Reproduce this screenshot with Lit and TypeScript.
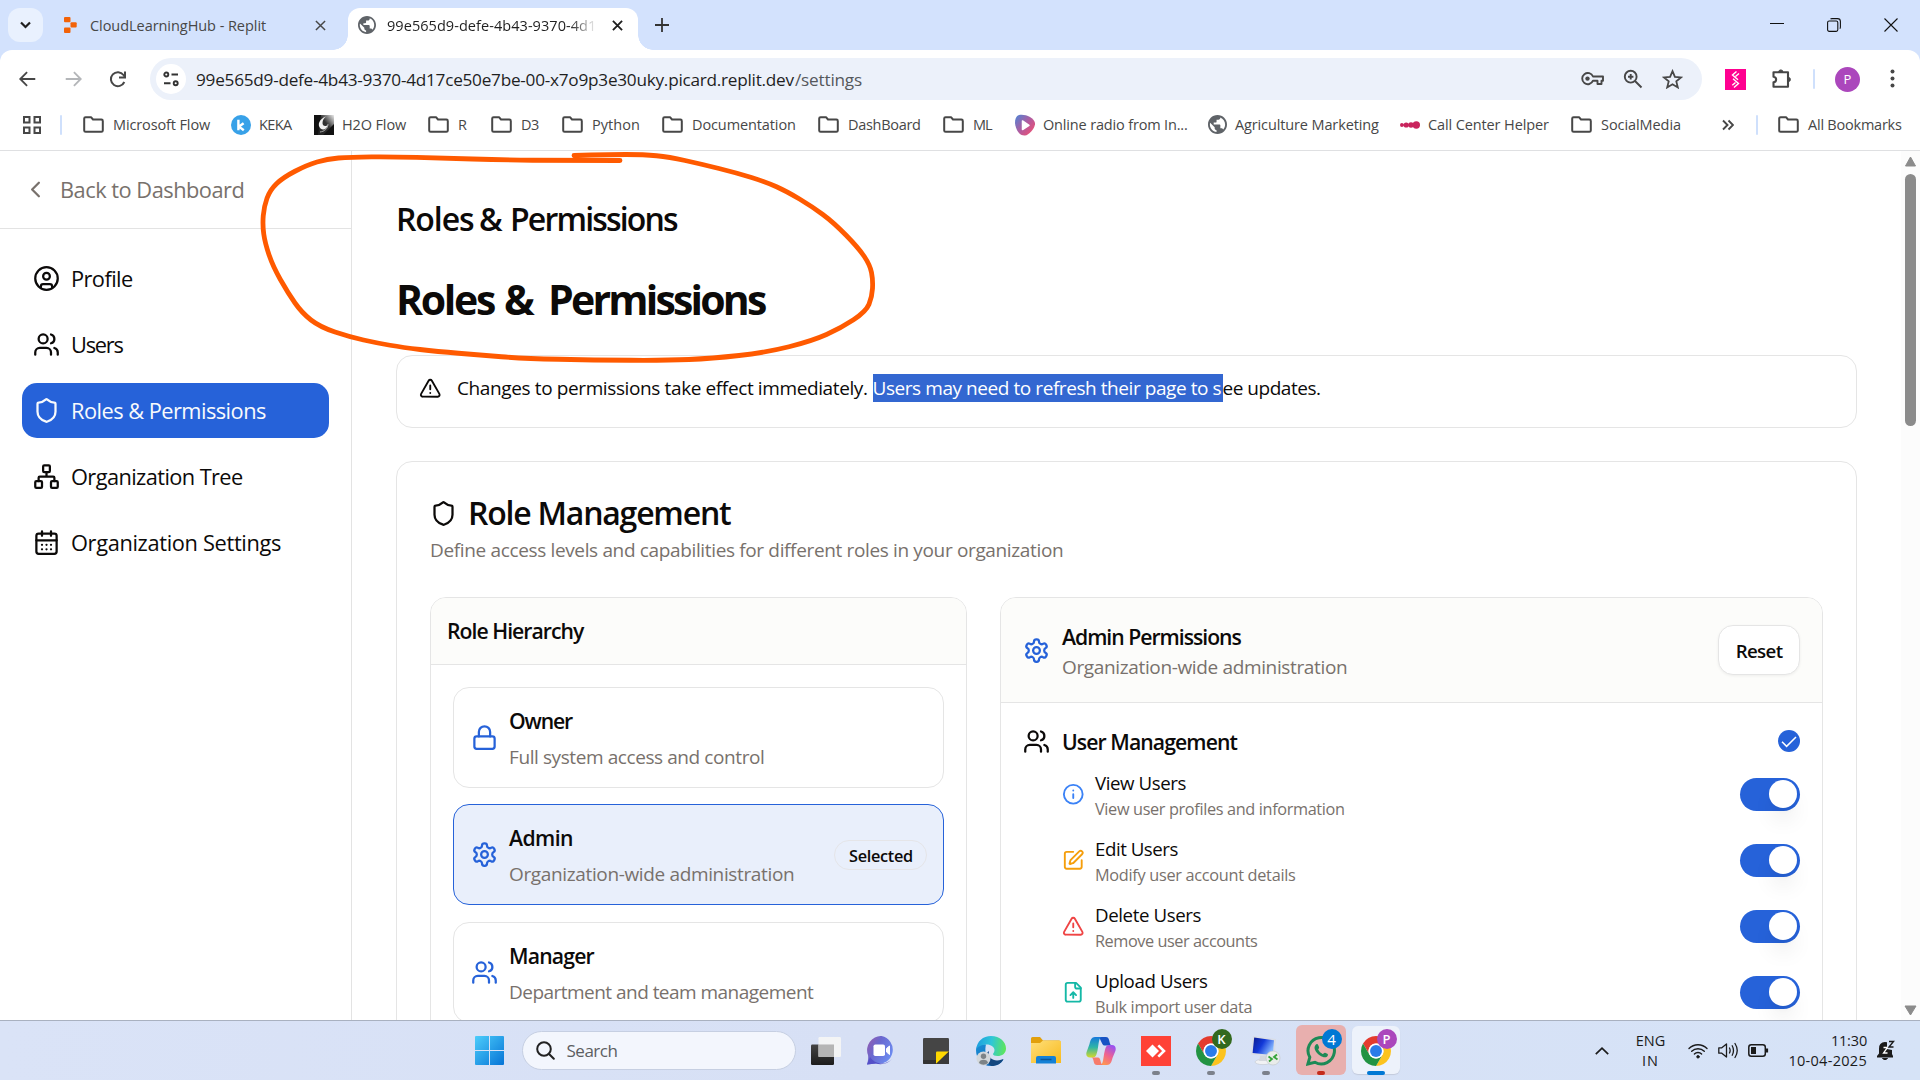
import { LitElement, html, css, svg, nothing } from "lit";
import { customElement, property } from "lit/decorators.js";

/* A single line of text whose tracking is tuned so that its ink spans `w` pixels. */
@customElement("fit-text")
class FitText extends LitElement {
  @property() text = "";
  @property({ type: Number }) w = 0;
  static styles = css`
    :host { display: inline-block; white-space: pre; }
  `;
  render() {
    return html`${this.text}`;
  }
  updated() {
    if (!this.w || this.text.length < 2) return;
    const cs = getComputedStyle(this);
    const ctx = document.createElement("canvas").getContext("2d")!;
    ctx.font = `${cs.fontWeight} ${cs.fontSize} ${cs.fontFamily}`;
    const m = ctx.measureText(this.text);
    const ink = m.actualBoundingBoxLeft + m.actualBoundingBoxRight;
    this.style.letterSpacing = `${(this.w - ink) / (this.text.length - 1)}px`;
  }
}

const t = (text: string, w: number) => html`<fit-text .text=${text} .w=${w}></fit-text>`;

/* 24-unit stroke icons */
const glyphs: Record<string, unknown> = {
  chevron: svg`<path d="m15 18-6-6 6-6"/>`,
  profile: svg`<circle cx="12" cy="12" r="10"/><circle cx="12" cy="10" r="3"/><path d="M7 20.662V19a2 2 0 0 1 2-2h6a2 2 0 0 1 2 2v1.662"/>`,
  users: svg`<path d="M16 21v-2a4 4 0 0 0-4-4H6a4 4 0 0 0-4 4v2"/><circle cx="9" cy="7" r="4"/><path d="M22 21v-2a4 4 0 0 0-3-3.87"/><path d="M16 3.13a4 4 0 0 1 0 7.75"/>`,
  shield: svg`<path d="M20 13c0 5-3.5 7.5-7.66 8.95a1 1 0 0 1-.67-.01C7.5 20.5 4 18 4 13V6a1 1 0 0 1 1-1c2 0 4.5-1.2 6.24-2.72a1.17 1.17 0 0 1 1.52 0C14.51 3.81 17 5 19 5a1 1 0 0 1 1 1z"/>`,
  network: svg`<rect x="16" y="16" width="6" height="6" rx="1"/><rect x="2" y="16" width="6" height="6" rx="1"/><rect x="9" y="2" width="6" height="6" rx="1"/><path d="M5 16v-3a1 1 0 0 1 1-1h12a1 1 0 0 1 1 1v3M12 12V8"/>`,
  calendar: svg`<path d="M8 2v4M16 2v4"/><rect x="3" y="4" width="18" height="18" rx="2"/><path d="M3 10h18M8 14h.01M12 14h.01M16 14h.01M8 18h.01M12 18h.01M16 18h.01"/>`,
  alert: svg`<path d="m21.73 18-8-14a2 2 0 0 0-3.48 0l-8 14A2 2 0 0 0 4 21h16a2 2 0 0 0 1.73-3M12 9v4M12 17h.01"/>`,
  lock: svg`<rect x="3" y="11" width="18" height="11" rx="2"/><path d="M7 11V7a5 5 0 0 1 10 0v4"/>`,
  gear: svg`<path d="M12.22 2h-.44a2 2 0 0 0-2 2v.18a2 2 0 0 1-1 1.73l-.43.25a2 2 0 0 1-2 0l-.15-.08a2 2 0 0 0-2.73.73l-.22.38a2 2 0 0 0 .73 2.73l.15.1a2 2 0 0 1 1 1.72v.51a2 2 0 0 1-1 1.74l-.15.09a2 2 0 0 0-.73 2.73l.22.38a2 2 0 0 0 2.73.73l.15-.08a2 2 0 0 1 2 0l.43.25a2 2 0 0 1 1 1.73V20a2 2 0 0 0 2 2h.44a2 2 0 0 0 2-2v-.18a2 2 0 0 1 1-1.73l.43-.25a2 2 0 0 1 2 0l.15.08a2 2 0 0 0 2.73-.73l.22-.39a2 2 0 0 0-.73-2.73l-.15-.08a2 2 0 0 1-1-1.74v-.5a2 2 0 0 1 1-1.74l.15-.09a2 2 0 0 0 .73-2.73l-.22-.38a2 2 0 0 0-2.73-.73l-.15.08a2 2 0 0 1-2 0l-.43-.25a2 2 0 0 1-1-1.73V4a2 2 0 0 0-2-2z"/><circle cx="12" cy="12" r="3"/>`,
  info: svg`<circle cx="12" cy="12" r="10"/><path d="M12 16v-4M12 8h.01"/>`,
  edit: svg`<path d="M12 3H5a2 2 0 0 0-2 2v14a2 2 0 0 0 2 2h14a2 2 0 0 0 2-2v-7"/><path d="M18.375 2.625a1 1 0 0 1 3 3l-9.013 9.014a2 2 0 0 1-.853.505l-2.873.84a.5.5 0 0 1-.62-.62l.84-2.873a2 2 0 0 1 .506-.852z"/>`,
  upload: svg`<path d="M15 2H6a2 2 0 0 0-2 2v16a2 2 0 0 0 2 2h12a2 2 0 0 0 2-2V7Z"/><path d="M14 2v4a2 2 0 0 0 2 2h4M12 12v6M15 15l-3-3-3 3"/>`,
};
const line = (name: string, size = 27, cls = "") =>
  html`<svg class="ic ${cls}" width=${size} height=${size} viewBox="0 0 24 24" fill="none" stroke="currentColor" stroke-width="2" stroke-linecap="round" stroke-linejoin="round">${glyphs[name]}</svg>`;

const globe = (s: number) =>
  html`<svg class="ic" width=${s} height=${s} viewBox="2 2 20 20" fill="#5f6368"><path d="M12 2C6.48 2 2 6.48 2 12s4.48 10 10 10 10-4.48 10-10S17.52 2 12 2zm-1 17.93c-3.95-.49-7-3.85-7-7.93 0-.62.08-1.21.21-1.79L9 15v1c0 1.1.9 2 2 2v1.93zm6.9-2.54c-.26-.81-1-1.39-1.9-1.39h-1v-3c0-.55-.45-1-1-1H8v-2h2c.55 0 1-.45 1-1V7h2c1.1 0 2-.9 2-2v-.41c2.93 1.19 5 4.06 5 7.41 0 2.08-.8 3.97-2.1 5.39z"/></svg>`;

const cross = (s: number, w: number) =>
  html`<svg class="ic" width=${s} height=${s} viewBox="0 0 12 12" stroke="currentColor" stroke-width=${w} fill="none"><path d="M1 1l10 10M11 1L1 11"/></svg>`;

const folder = html`<svg class="ic" width="21" height="17" viewBox="0 0 21 17" fill="none" stroke="#474747" stroke-width="2" stroke-linejoin="round"><path d="M1.2 2.6c0-.8.6-1.4 1.4-1.4H8l2 2.3h8.4c.8 0 1.4.6 1.4 1.4v9.5c0 .8-.6 1.4-1.4 1.4H2.6c-.8 0-1.4-.6-1.4-1.4z"/></svg>`;

const keka = html`<svg class="ic" width="20" height="20" viewBox="0 0 20 20"><circle cx="10" cy="10" r="10" fill="#38a1e8"/><path d="M7.4 4.8v10.4M12.6 8.2L8 11.6l4.8 3.6" stroke="#fff" stroke-width="2.4" fill="none"/></svg>`;

const h2o = html`<svg class="ic" width="20" height="20" viewBox="0 0 20 20"><defs><linearGradient id="h" x1="0" x2="1" y1="1" y2="0"><stop offset="0" stop-color="#222"/><stop offset=".55" stop-color="#333"/><stop offset="1" stop-color="#eee"/></linearGradient></defs><path fill="#111" d="M0 0h20v20H0z"/><path fill="url(#h)" d="M7 0h13v9L9 20H4z"/><path d="M12 1.500C5 4 3 10 6.500 13.500c3 2.500 7 0 7.500-4-2 2.500-5.500 2-5.500-1.500C8.500 5 10 3 12 1.500z" fill="#f2f2f2"/><path d="M14 9c0 5-4 7.500-8 8" stroke="#aaa" fill="none"/></svg>`;

const radio = html`<svg class="ic" width="20" height="22" viewBox="0 0 20 22"><defs><linearGradient id="r" x1="0" y1="0" x2="1" y2=".9"><stop offset="0" stop-color="#4a86d8"/><stop offset=".55" stop-color="#b65a9c"/><stop offset="1" stop-color="#f4506e"/></linearGradient></defs><path fill="url(#r)" d="M4 1C9-.5 19 3 20 9c.5 5-6 12-10 12.500C4 22 .5 15 0 9 0 5 1 2 4 1z"/><path d="M7.500 7v8.500l6.500-4.200z" fill="#fff" stroke="#fff" stroke-width="1.500" stroke-linejoin="round"/></svg>`;

const callCenter = html`<svg class="ic" width="20" height="12" viewBox="0 0 20 12" fill="#c9245d"><circle cx="1.900" cy="6" r="1.900"/><circle cx="6.200" cy="6" r="2.600"/><circle cx="11" cy="6" r="2.800"/><circle cx="16.300" cy="6" r="3.700"/><path d="M2 5.300h14v1.400H2z"/></svg>`;

const chrome = html`<svg class="ic" width="30" height="30" viewBox="2 2 44 44"><path fill="#e33b2e" d="M4.950 13A22 22 0 0 1 43.050 13H24A11 11 0 0 0 14.470 29.500Z"/><path fill="#fcc31e" d="M43.050 13A22 22 0 0 1 24 46L33.530 29.500A11 11 0 0 0 24 13Z"/><path fill="#229342" d="M24 46A22 22 0 0 1 4.950 13L14.470 29.500A11 11 0 0 0 33.530 29.500Z"/><circle cx="24" cy="24" r="11" fill="#fff"/><circle cx="24" cy="24" r="8.700" fill="#2a7be9"/></svg>`;

const tb = {
  taskview: html`<svg class="ic" width="30" height="28" viewBox="0 0 30 28"><defs><linearGradient id="tv" x1="0" y1="0" x2="0" y2="1"><stop offset="0" stop-color="#444"/><stop offset="1" stop-color="#1c1c1c"/></linearGradient></defs><rect y="7.500" width="23" height="20.500" rx="1.200" fill="url(#tv)"/><rect x="7.500" width="22.500" height="20" rx="1.200" fill="#f4f4f4" opacity=".95"/><rect x="7.500" y="7.500" width="15.500" height="12.500" fill="#b5b5b5"/></svg>`,
  chat: html`<svg class="ic" width="30" height="29" viewBox="0 0 30 29"><defs><linearGradient id="ch" x1="0" y1="0" x2="1" y2=".6"><stop offset="0" stop-color="#9a5bab"/><stop offset=".45" stop-color="#6a68cf"/><stop offset="1" stop-color="#6d8cf0"/></linearGradient></defs><path fill="url(#ch)" d="M15.500 0A14 14 0 1 1 10 27.500L1 28.500C2 25 2.500 22 2 19A14 14 0 0 1 15.500 0z"/><path d="M4 21a14 14 0 0 0 22 2c-4 5-11 6-16 4.500l-9 1z" fill="#5550c8"/><rect x="7.500" y="8.500" width="11.500" height="11.500" rx="1.800" fill="#fff"/><path d="M20.500 12.500l3-2.500v8.500l-3-2.500z" fill="#fff" stroke="#fff" stroke-linejoin="round"/></svg>`,
  sticky: html`<svg class="ic" width="26" height="26" viewBox="0 0 26 26"><rect width="26" height="26" rx="1.200" fill="#454545"/><path fill="#333" d="M0 22h26v3a1 1 0 0 1-1 1H1a1 1 0 0 1-1-1z"/><path d="M13 26V14.500a1 1 0 0 1 1-1h12z" fill="#ffd800"/><path d="M26 13.500V26H13z" fill="#3a3a3a"/></svg>`,
  edge: html`<svg class="ic" width="30" height="30" viewBox="0 0 30 30"><defs><linearGradient id="e1" x1="0" y1=".4" x2="1" y2=".5"><stop offset="0" stop-color="#1d9ee0"/><stop offset=".5" stop-color="#2fc6d8"/><stop offset="1" stop-color="#5ee659"/></linearGradient><linearGradient id="e2" x1="0" y1="0" x2="1" y2="1"><stop offset="0" stop-color="#1b8fd6"/><stop offset="1" stop-color="#0f5fb2"/></linearGradient></defs><path fill="url(#e2)" d="M0 14c0-4 5-6.500 10-5.500-1 4-2 14 7 17 4 1 8-.5 10.500-2C25 28 20 30 15 30 6 30 0 23 0 14z"/><path fill="#14477f" d="M13 15c-1.500 6 3 9.500 8 9.500 3 0 5.500-1.500 6.500-1.500C25 28 20 30 15.500 30 9 27 8 18 13 15z"/><path fill="url(#e1)" d="M0 14C1 5 7 0 15 0c9 0 15 6 15 12.500 0 5-4 7.500-8.500 7.500-3 0-4.500-1-4.500-2 0-.7 1.500-1.500 1.500-4C18.500 11 15 8.500 10.500 8.500 5 8.500 1 11 0 14z"/><circle cx="7.500" cy="22.500" r="7" fill="#d3d7da"/><circle cx="7.500" cy="20.300" r="2.700" fill="#7d8387"/><path d="M3 27c0-4.500 9-4.500 9 0a7 7 0 0 1-9 0z" fill="#7d8387"/></svg>`,
  explorer: html`<svg class="ic" width="30" height="27" viewBox="0 0 30 27"><defs><linearGradient id="fx" x1="0" y1="0" x2="1" y2="1"><stop offset="0" stop-color="#ffdf7a"/><stop offset="1" stop-color="#f8ba1d"/></linearGradient></defs><path d="M0 1.500A1.500 1.500 0 0 1 1.500 0H9l3 3.500h16a1.500 1.500 0 0 1 1.500 1.500v8H0z" fill="#e2a00c"/><path fill="url(#fx)" d="M0 6h9l3-2.500h16.500A1.500 1.500 0 0 1 30 5v21H0z"/><path d="M5 26.500V21a2 2 0 0 1 2-2h16a2 2 0 0 1 2 2v5.500z" fill="#1481d6"/><path d="M9.500 22.500h11" stroke="#0c5697" stroke-width="1.500"/></svg>`,
  copilot: html`<svg class="ic" width="30" height="28" viewBox="0 0 30 28"><defs><linearGradient id="c1" x1="0" y1="0" x2="0" y2="1"><stop offset="0" stop-color="#1678dc"/><stop offset=".5" stop-color="#2fb5a6"/><stop offset="1" stop-color="#d5d92a"/></linearGradient><linearGradient id="c2" x1=".7" y1="0" x2=".2" y2="1"><stop offset="0" stop-color="#9a52f0"/><stop offset=".5" stop-color="#f0638f"/><stop offset="1" stop-color="#ff9a4c"/></linearGradient></defs><path fill="#1753c4" d="M12 0h8c3 0 3 3 4 6.500.4 1.500 1 2 2.500 2h-8c-3 0-4-8.500-6.500-8.500z"/><path fill="url(#c1)" d="M16 0H9C5.500 0 4.500 3 3.500 7L.6 15c-1 3.500.4 5.500 3.400 5.500h3c3 0 3.500-3 4.500-7C12.800 8 12.500 0 16 0z"/><path fill="url(#c2)" d="M14 28h7c3.500 0 4.500-3 5.500-7l2.900-7c1-3.500-.4-6-3.400-6h-3c-3 0-3.500 3-4.500 7C17.200 20 17.500 28 14 28z"/><path fill="#f77b6b" d="M17 28h-6c-3 0-3-3-4-6-.4-1-1-1.500-2.500-1.500h7.500C15 20.500 14 27 17 28z"/></svg>`,
  anydesk: html`<svg class="ic" width="30" height="30" viewBox="0 0 30 30"><path fill="#ff4236" d="M0 0h30v30H0z"/><path fill="#fff" d="M5 15l6.500-6.500L18 15l-6.500 6.500z"/><path d="M17.300 9.300L23 15l-5.700 5.700" fill="none" stroke="#fff" stroke-width="2.600"/></svg>`,
  rdp: html`<svg class="ic" width="30" height="30" viewBox="0 0 30 30"><defs><linearGradient id="rd" x1="0" y1="0" x2="1" y2=".5"><stop offset="0" stop-color="#0a1a8c"/><stop offset=".5" stop-color="#1238d8"/><stop offset="1" stop-color="#86b8ff"/></linearGradient></defs><ellipse cx="12" cy="26" rx="8" ry="2.600" fill="#f1f2f4" stroke="#c5c9d0" stroke-width=".6"/><path d="M9 20h7l1 5H8z" fill="#d5d8de"/><path d="M2 0l23 3-1.500 18L0 18.500z" fill="#d9dde6"/><path d="M3.200 1.500l19.800 2.700-1.200 15L1.600 17z" fill="url(#rd)"/><circle cx="22" cy="22" r="7" fill="#e9ecea" stroke="#bfc4c4" stroke-width=".6"/><path d="M17.500 20.500l3.500 2.500-3 2.500M26 18.500l-3 2.500 3.500 2.500" fill="none" stroke="#35a438" stroke-width="1.800"/></svg>`,
  whatsapp: html`<svg class="ic" width="30" height="30" viewBox="0 0 30 30" fill="none" stroke="#1d8a56" stroke-width="3"><path d="M1.900 28l1.900-6.700A13.200 13.200 0 1 1 8.900 26.300z"/><path d="M9.500 9c1.200-1.500 2.300-1 2.800.2l.8 2c.3 1-1.300 1.800-.8 2.600 1 1.900 2.300 3.100 4.300 4.100.9.400 1.500-1.400 2.500-1.100l2.200 1c1 .5.800 2-.4 2.900-1.600 1.200-4 .8-7.300-1.400-3.600-2.800-6.700-7-4.100-10.300z" fill="#1d8a56" stroke="none"/></svg>`,
};

const bookmarks: [unknown, string, number, boolean][] = [
  [folder, "Microsoft Flow", 97, true],
  [keka, "KEKA", 33, false],
  [h2o, "H2O Flow", 64, false],
  [folder, "R", 8, true],
  [folder, "D3", 17, true],
  [folder, "Python", 46, true],
  [folder, "Documentation", 102, true],
  [folder, "DashBoard", 71, true],
  [folder, "ML", 19, true],
  [radio, "Online radio from In...", 144, false],
  [globe(19), "Agriculture Marketing", 144, false],
  [callCenter, "Call Center Helper", 121, false],
  [folder, "SocialMedia", 79, true],
];
const bookmarkWidths = [148, 83, 114, 63, 71, 100, 156, 125, 72, 193, 192, 171, 111];

const nav: [string, string, number][] = [
  ["profile", "Profile", 60],
  ["users", "Users", 51.5],
  ["shield", "Roles & Permissions", 193],
  ["network", "Organization Tree", 171],
  ["calendar", "Organization Settings", 209],
];

const roles: [string, string, number, string, number][] = [
  ["lock", "Owner", 63, "Full system access and control", 254],
  ["gear", "Admin", 63, "Organization-wide administration", 284],
  ["users", "Manager", 84.5, "Department and team management", 304],
];

const perms: [string, string, number, string, number][] = [
  ["info", "View Users", 91.5, "View user profiles and information", 249],
  ["edit", "Edit Users", 82.5, "Modify user account details", 200],
  ["alert", "Delete Users", 105.5, "Remove user accounts", 162],
  ["upload", "Upload Users", 112, "Bulk import user data", 155.5],
];

/* Pen stroke, smoothed through the midpoints of its samples. */
const pen: [number, number][] = [
  [620, 160.500], [560, 160.500], [505, 160], [440, 158], [393, 156.700], [350, 157], [327, 159], [307, 165], [283, 177.500],
  [270, 190], [264, 206.500], [262.500, 225], [265, 243], [273, 266.500], [288, 293], [302, 313], [320, 327], [350, 337],
  [377, 343], [403, 347.500], [437, 351.500], [480, 355], [523, 358.500], [594, 360], [666, 360.500], [712, 358.500],
  [766, 352.500], [812, 341], [841, 328], [866, 311.500], [872, 297], [873, 280], [870, 265], [858.600, 248], [833.600, 222.500],
  [812, 206.500], [787, 191.500], [766, 182], [737, 173], [701, 164], [669, 157], [644, 154.500], [608, 154.500], [574, 155.500],
];
const penPath =
  `M${pen[0]}` +
  pen
    .slice(1, -1)
    .map((p, i) => {
      const n = pen[i + 2];
      return `Q${p} ${(p[0] + n[0]) / 2} ${(p[1] + n[1]) / 2}`;
    })
    .join("") +
  `L${pen[pen.length - 1]}`;

@customElement("app-root")
class AppRoot extends LitElement {
  static styles = css`
    :host { display: block; width: 1920px; height: 1080px; overflow: hidden; position: relative; background: #fff; font-family: "Open Sans", "Noto Sans", sans-serif; color: #0c0a09; }
    * { box-sizing: border-box; }
    .ic { display: block; flex: none; }
    .screen { display: flex; flex-direction: column; height: 1080px; }

    .tabs { height: 50px; flex: none; background: #d3e2fd; display: flex; align-items: center; font-size: 14.500px; color: #474747; }
    .drop { width: 35px; height: 34px; margin-left: 8px; border-radius: 12px; background: #e9f1fe; display: grid; place-items: center; color: #1f1f1f; }
    .tab1 { display: flex; align-items: center; width: 305px; padding-left: 20px; }
    .tab1 fit-text { margin-left: 13px; }
    .tab1 .x { margin-left: auto; margin-right: 22px; }
    .tab2 { position: relative; align-self: flex-end; width: 290px; height: 42px; border-radius: 12px 12px 0 0; background: #fff; display: flex; align-items: center; padding: 0 15px 8px 10px; color: #1f1f1f; }
    .tab2::before, .tab2::after { content: ""; position: absolute; bottom: 0; width: 15px; height: 15px; }
    .tab2::before { left: -15px; background: radial-gradient(circle at 0 0, transparent 14.500px, #fff 15px); }
    .tab2::after { right: -15px; background: radial-gradient(circle at 100% 0, transparent 14.500px, #fff 15px); }
    .tab2 .title { margin-left: 11px; width: 208px; overflow: hidden; -webkit-mask-image: linear-gradient(90deg, #000 88%, transparent 101%); mask-image: linear-gradient(90deg, #000 88%, transparent 101%); }
    .tab2 .x { margin-left: auto; }
    .plus { margin-left: 17px; color: #333; }
    .win { margin-left: auto; display: flex; align-items: center; gap: 43px; padding-right: 22px; color: #111; }

    .barwrap { background: #d3e2fd; flex: none; }
    .bar { height: 50px; display: flex; align-items: center; padding: 8px 0 0 18px; background: #fff; border-radius: 12px 12px 0 0; }
    .navs { display: flex; gap: 25px; width: 132px; flex: none; color: #474747; }
    .fwd { color: #b4b6b9; }
    .omni { width: 1552px; height: 42px; border-radius: 21px; background: #ecf1fa; display: flex; align-items: center; padding-left: 6px; font-size: 17.200px; color: #1f1f1f; flex: none; }
    .site { width: 30px; height: 30px; border-radius: 50%; background: #fff; display: grid; place-items: center; margin-right: 10px; flex: none; }
    .url { width: 599px; flex: none; }
    .path { color: #55585c; flex: 1; }
    .omniic { display: flex; align-items: center; gap: 19px; padding-right: 19px; color: #474747; }
    .ext { display: flex; align-items: center; margin-left: 23px; color: #474747; }
    .sep { width: 2px; height: 20px; border-radius: 1px; background: #cfe0fc; flex: none; }
    .ext .puz { margin-left: 25px; }
    .ext .sep { margin-left: 20px; }
    .av { width: 25px; height: 25px; border-radius: 50%; background: #ab47bc; color: #fff; display: grid; place-items: center; font-size: 13px; margin-left: 20px; }
    .dots { margin-left: 30px; }

    .marks { height: 51px; flex: none; background: #fff; border-bottom: 1px solid #dfe0e2; display: flex; align-items: center; padding: 0 0 1px 23px; font-size: 14.500px; color: #474747; }
    .marks > .sep { margin: 0 21px 0 19px; }
    .mark { display: flex; align-items: center; flex: none; }
    .mark fit-text { margin-left: 8px; }
    .mark.f fit-text { margin-left: 9px; }
    .more { margin-left: 40px; }
    .more + .sep { margin: 0 20px 0 22px; }

    .page { height: 869px; flex: none; display: flex; overflow: hidden; background: #fff; }
    .side { width: 352px; flex: none; border-right: 1px solid #e3e3e3; font-size: 21.800px; }
    .back { height: 78px; border-bottom: 1px solid #e3e3e3; display: flex; align-items: center; padding-left: 22px; color: #78716c; }
    .back fit-text { margin-left: 11px; }
    .nav { padding: 22px 22px 0; display: flex; flex-direction: column; gap: 11px; }
    .item { height: 55px; border-radius: 15px; display: flex; align-items: center; padding-left: 11px; gap: 11px; }
    .item.on { background: #2662d9; color: #f8fafc; }

    .main { flex: 1; padding: 45px 44px 0; min-width: 0; display: flex; flex-direction: column; }
    .h2 { font-size: 32px; line-height: 45px; font-weight: 600; display: grid; grid-template-columns: 83px 31px auto; }
    .h1 { font-size: 41px; line-height: 50px; margin-top: 33px; font-weight: 700; display: grid; grid-template-columns: 108px 44px auto; }
    .h1 > *, .h2 > * { justify-self: start; }
    .alert { margin-top: 31px; height: 73px; flex: none; border: 1px solid #e5e5e5; border-radius: 16px; display: flex; padding: 18px 22px; font-size: 19px; line-height: 28px; }
    .alert .ic { margin-top: 3px; }
    .alert .a1 { width: 416px; margin-left: 15px; flex: none; padding-left: 0.500px; }
    .alert .sel { background: #3367d1; color: #fff; width: 350px; height: 28px; flex: none; white-space: nowrap; }
    .card { margin-top: 33px; border: 1px solid #e5e5e5; border-radius: 16px; padding: 33px 33px 0; flex: none; height: 800px; }
    .ctitle { display: flex; align-items: center; gap: 11px; font-size: 32px; line-height: 36px; height: 36px; font-weight: 600; }
    .csub { font-size: 19px; line-height: 28px; margin-top: 5px; color: #78716c; }
    .cols { display: grid; grid-template-columns: 537px 823px; gap: 33px; margin-top: 33px; }
    .panel { border: 1px solid #e5e5e5; border-radius: 16px; height: 600px; overflow: hidden; }
    .phead { background: #fcfcfa; border-bottom: 1px solid #e5e5e5; display: flex; align-items: center; font-size: 21.200px; font-weight: 600; }
    .phead.l { height: 67px; padding: 0 0 1px 16px; }
    .phead.r { height: 105px; padding: 0 22px; gap: 12px; }
    .pt { line-height: 28px; padding-top: 3px; }
    .pd { font-size: 19px; font-weight: 400; color: #78716c; margin-top: 2px; }
    .blue { color: #2662d9; }
    .reset { margin-left: auto; width: 82px; height: 50px; border: 1px solid #e5e5e5; border-radius: 15px; background: #fff; box-shadow: 0 1px 3px rgba(0, 0, 0, 0.06); display: grid; place-items: center; font-size: 18.700px; font-weight: 600; }
    .list { padding: 22px; display: flex; flex-direction: column; gap: 16.300px; }
    .role { height: 101px; border: 1px solid #e5e5e5; border-radius: 16px; display: flex; align-items: center; padding: 0 16px 0 17px; gap: 11px; flex: none; }
    .role.on { background: #e9effb; border-color: #2662d9; }
    .rn { font-size: 21.200px; line-height: 34px; font-weight: 600; }
    .rd { font-size: 19px; line-height: 28px; margin-top: 5px; color: #78716c; }
    .badge { margin-left: auto; width: 93px; height: 30px; border-radius: 15px; border: 1px solid #e5e5e8; display: grid; place-items: center; font-size: 16.300px; font-weight: 600; line-height: 28px; padding: 1px 0 0 1px; }
    .sect { padding: 21px 22px 0; }
    .um { height: 34px; display: flex; align-items: center; gap: 12px; font-size: 21.200px; font-weight: 600; }
    .tick { margin-left: auto; }
    .perm { height: 66px; display: flex; align-items: center; gap: 11px; padding-left: 38.500px; }
    .perms { padding-top: 3px; }
    .pn { font-size: 18.700px; line-height: 26px; padding-top: 3px; height: 29px; }
    .pp { font-size: 16.300px; line-height: 26px; height: 26px; color: #78716c; }
    .info { color: #3b82f6; } .edit { color: #f59e0b; } .alertc { color: #ef4444; } .upload { color: #14b8a6; }
    .switch { margin-left: auto; width: 60px; height: 33px; border-radius: 17px; background: #2662d9; display: flex; align-items: center; justify-content: flex-end; padding: 0 3px 1px 0; }
    .knob { width: 28px; height: 28px; border-radius: 50%; background: #fff; box-shadow: 0 15px 22px -4px rgba(0, 0, 0, 0.1), 0 6px 9px -6px rgba(0, 0, 0, 0.1); }
    .scroll { width: 19px; flex: none; background: #fcfcfc; display: flex; flex-direction: column; align-items: center; padding: 5px 0 4px; }
    .thumb { width: 11px; height: 252px; border-radius: 6px; background: #8b8b8b; margin-top: 7px; }
    .scroll .dn { margin-top: auto; }

    .task { height: 60px; flex: none; border-top: 1px solid #a9b1c0; background: linear-gradient(90deg, #dae3f7, #d7e0f5 45%, #d6e3f7); display: flex; align-items: center; padding-left: 475px; font-size: 14.500px; }
    .search { width: 274px; height: 39px; margin-left: 17.500px; border-radius: 20px; background: #f3f6fd; border: 1px solid #c6cfe2; display: flex; align-items: center; padding-left: 13px; font-size: 17px; color: #5c5e62; }
    .search fit-text { margin-left: 12px; }
    .apps { display: flex; margin-left: 3px; }
    .app { width: 55px; height: 59px; display: grid; place-items: center; position: relative; }
    .tile { position: absolute; border-radius: 6px; left: 2px; top: 4px; width: 50px; height: 50px; background: #e8afae; }
    .tile.w { left: 3px; top: 5px; width: 48px; height: 48px; background: #edf2fb; box-shadow: 0 1px 1px #c4cbdc; }
    .app > .ic { position: relative; }
    .dot { position: absolute; bottom: 5px; left: 50%; width: 8px; height: 4px; margin-left: -4px; border-radius: 2px; background: #7c818b; }
    .dot.red { background: #c42b1c; }
    .dot.act { width: 18px; margin-left: -9px; background: #0078d4; }
    .pill { position: absolute; left: 28px; top: 8px; width: 20px; height: 20px; border-radius: 50%; display: grid; place-items: center; color: #fff; font-size: 13px; line-height: 20px; font-weight: 600; }
    .pill.k { background: #33691e; } .pill.p { background: #ab47bc; } .pill.n { background: #0078d4; font-size: 15px; font-weight: 400; }
    .tray { margin-left: auto; display: flex; align-items: center; color: #1b1b1b; padding-right: 25px; }
    .lang { line-height: 19.500px; text-align: center; width: 44px; margin-left: 19px; display: grid; justify-items: center; }
    .wifi { margin-left: 16px; } .vol { margin-left: 10px; } .batt { margin-left: 9px; } .bell { margin-left: 10px; }
    .clock { line-height: 19.500px; display: grid; justify-items: end; margin-left: 19px; }
    .ink { position: absolute; left: 0; top: 0; pointer-events: none; }
  `;

  render() {
    return html`<div class="screen">
        ${this.tabStrip()} ${this.toolbar()} ${this.bookmarkBar()}
        <div class="page">${this.sidebar()} ${this.content()} ${this.scrollbar()}</div>
        ${this.taskbar()}
      </div>
      <svg class="ink" width="1000" height="400" fill="none" stroke="#ff5a00" stroke-width="4.800" stroke-linecap="round" stroke-linejoin="round"><path d=${penPath} /></svg>`;
  }

  tabStrip() {
    return html`<div class="tabs">
      <div class="drop"><svg class="ic" width="11" height="8" viewBox="0 0 11 8" fill="none" stroke="currentColor" stroke-width="2.200"><path d="M1 1.500l4.500 4.500L10 1.500"/></svg></div>
      <div class="tab1">
        <svg class="ic" width="14" height="16" viewBox="0 0 14 16" fill="#f26207"><rect x="1" width="6.500" height="5.300" rx="1"/><rect x="7.500" y="5.300" width="6.200" height="5.300" rx="1"/><rect x="1" y="10.600" width="6.500" height="5.300" rx="1"/></svg>
        ${t("CloudLearningHub - Replit", 176)}
        <span class="x">${cross(11, 1.6)}</span>
      </div>
      <div class="tab2">${globe(18)}
        <div class="title">${t("99e565d9-defe-4b43-9370-4d1", 207)}</div>
        <span class="x">${cross(11, 2)}</span>
      </div>
      <span class="plus"><svg class="ic" width="14" height="14" viewBox="0 0 14 14" stroke="currentColor" stroke-width="1.800"><path d="M7 0v14M0 7h14"/></svg></span>
      <div class="win">
        <svg class="ic" width="14" height="14" viewBox="0 0 14 14" stroke="currentColor"><path d="M0 5.500h14"/></svg>
        <svg class="ic" width="14" height="14" viewBox="0 0 14 14" stroke="currentColor" fill="none" stroke-width="1.100"><rect x=".6" y="3" width="10.200" height="10.400" rx="1.600"/><path d="M3.500 1Q4 .6 5 .6h5.500a2.900 2.900 0 0 1 2.900 2.900V9q0 1.200-.6 1.700"/></svg>
        <svg class="ic" width="14" height="14" viewBox="0 0 14 14" stroke="currentColor" stroke-width="1.100"><path d="M.5.5l13 13M13.500.5l-13 13"/></svg>
      </div>
    </div>`;
  }

  toolbar() {
    const arrow = svg`<path d="M19 10H3M10 2.500L2.500 10l7.500 7.500"/>`;
    return html`<div class="barwrap"><div class="bar">
      <div class="navs">
        <svg class="ic" width="20" height="20" viewBox="0 -1 22 22" fill="none" stroke="currentColor" stroke-width="2">${arrow}</svg>
        <svg class="ic fwd" width="20" height="20" viewBox="0 -1 22 22" fill="none" stroke="currentColor" stroke-width="2"><g transform="matrix(-1 0 0 1 22 0)">${arrow}</g></svg>
        <svg class="ic" width="20" height="20" viewBox="0 -.5 20 20" fill="none" stroke="currentColor" stroke-width="2"><path d="M16.300 12.500A7 7 0 1 1 15.500 5.500L16.500 7"/><path d="M17 2v6h-6"/></svg>
      </div>
      <div class="omni">
        <div class="site"><svg class="ic" width="16" height="16" viewBox="0 0 16 16" fill="none" stroke="#333" stroke-width="1.900"><circle cx="3.300" cy="3.500" r="2"/><path d="M8.500 3.500H15M1 12.300h6.500"/><circle cx="12.700" cy="12.300" r="2"/></svg></div>
        <div class="url">${t("99e565d9-defe-4b43-9370-4d17ce50e7be-00-x7o9p3e30uky.picard.replit.dev", 598.5)}</div>
        <div class="path">${t("/settings", 67)}</div>
        <div class="omniic">
          <svg class="ic" width="23" height="14" viewBox="0 0 23 14" fill="none" stroke="currentColor" stroke-width="1.900"><path d="M12 4.500H22v4.200h-1.500V12h-4V8.700H12A5.600 5.600 0 1 1 12 4.500z" stroke-linejoin="round"/><circle cx="6.500" cy="6.600" r="2.200" fill="currentColor" stroke="none"/></svg>
          <svg class="ic" width="20" height="20" viewBox="0 0 20 20" fill="none" stroke="currentColor" stroke-width="1.900"><circle cx="7.700" cy="7.700" r="5.900"/><path d="M12 12l6.500 6.500M7.700 5v5.400M5 7.700h5.400"/></svg>
          <svg class="ic" width="21" height="20" viewBox="0 0 21 20" fill="none" stroke="currentColor" stroke-width="1.800"><path d="M10.500 2.200l2.400 5.700 6.100.5-4.700 4 1.500 6-5.300-3.200-5.300 3.200 1.500-6-4.700-4 6.100-.5z"/></svg>
        </div>
      </div>
      <div class="ext">
        <svg class="ic" width="21" height="21" viewBox="0 0 21 21"><path fill="#ff0090" d="M0 0h21v21H0z"/><path d="M11.500 2.500L7.500 6l5.500 4.700M14 4.500L10.500 7.500M8 9.800l5.500 4.700L9 18.500M10.500 13.500L7.300 16.300" fill="none" stroke="#fff" stroke-width="1.400"/></svg>
        <svg class="ic puz" width="22" height="22" viewBox="0 0 22 22" fill="none" stroke="currentColor" stroke-width="2.100" stroke-linejoin="round"><path d="M2.500 4.200H17v14.600H2.500v-4.500c3.500-.5 3.500-5.100 0-5.600z"/><path d="M7.700 4a2.100 2.100 0 0 1 4.200 0zM17.300 9.400a2.100 2.100 0 0 1 0 4.200z" fill="currentColor" stroke-width="1"/></svg>
        <i class="sep"></i>
        <div class="av">P</div>
        <svg class="ic dots" width="5" height="20" viewBox="0 0 5 20" fill="#474747"><circle cx="2.500" cy="2.500" r="2"/><circle cx="2.500" cy="9.500" r="2"/><circle cx="2.500" cy="16.500" r="2"/></svg>
      </div>
    </div></div>`;
  }

  bookmarkBar() {
    return html`<div class="marks">
      <svg class="ic" width="18" height="18" viewBox="0 0 18 18" fill="none" stroke="#474747" stroke-width="2"><path d="M1 1h5.500v5.500H1zM11.500 1H17v5.500h-5.500zM1 11.500h5.500V17H1zM11.500 11.500H17V17h-5.500z"/></svg>
      <i class="sep"></i>
      ${bookmarks.map(([ic, text, w, f], i) => html`<div class="mark ${f ? "f" : ""}" style="width:${bookmarkWidths[i]}px">${ic}${t(text, w)}</div>`)}
      <svg class="ic more" width="12" height="12" viewBox="0 0 12 12" fill="none" stroke="#474747" stroke-width="1.900"><path d="M1 1.500L5.500 6 1 10.500M6.500 1.500L11 6l-4.500 4.500"/></svg>
      <i class="sep"></i>
      <div class="mark f">${folder}${t("All Bookmarks", 94)}</div>
    </div>`;
  }

  sidebar() {
    return html`<div class="side">
      <div class="back">${line("chevron", 27)}${t("Back to Dashboard", 181.5)}</div>
      <div class="nav">${nav.map(([ic, text, w], i) => html`<div class="item ${i === 2 ? "on" : ""}">${line(ic)}${t(text, w)}</div>`)}</div>
    </div>`;
  }

  content() {
    return html`<div class="main">
      <div class="h2">${t("Roles", 75)}${t("&", 0)}${t("Permissions", 165)}</div>
      <div class="h1">${t("Roles", 96)}${t("&", 0)}${t("Permissions", 215)}</div>
      <div class="alert">${line("alert", 22.5)}
        <span class="a1">${t("Changes to permissions take effect immediately.", 409)}</span>
        <span class="sel">${t("Users may need to refresh their page to s", 348)}</span>
        <span>${t("ee updates.", 96.5)}</span>
      </div>
      <div class="card">
        <div class="ctitle">${line("shield")}${t("Role Management", 260)}</div>
        <div class="csub">${t("Define access levels and capabilities for different roles in your organization", 632)}</div>
        <div class="cols">
          <div class="panel">
            <div class="phead l">${t("Role Hierarchy", 137)}</div>
            <div class="list">${roles.map(([ic, n, nw, d, dw], i) => html`<div class="role ${i === 1 ? "on" : ""}">
              ${line(ic, 27, "blue")}
              <div><div class="rn">${t(n, nw)}</div><div class="rd">${t(d, dw)}</div></div>
              ${i === 1 ? html`<div class="badge">${t("Selected", 63)}</div>` : nothing}
            </div>`)}</div>
          </div>
          <div class="panel">
            <div class="phead r">${line("gear", 27, "blue")}
              <div class="pt"><div>${t("Admin Permissions", 179.5)}</div><div class="pd">${t("Organization-wide administration", 284)}</div></div>
              <div class="reset">${t("Reset", 46)}</div>
            </div>
            <div class="sect">
              <div class="um">${line("users")}${t("User Management", 174.5)}
                <svg class="ic tick" width="22" height="22" viewBox="0 0 22 22"><circle cx="11" cy="11" r="11" fill="#2662d9"/><path d="M4 11.800l4.600 4.600L18 7" fill="none" stroke="#fff" stroke-width="1.500"/></svg>
              </div>
              <div class="perms">${perms.map(([ic, n, nw, d, dw]) => html`<div class="perm">
                ${line(ic, 22.5, ic === "alert" ? "alertc" : ic)}
                <div><div class="pn">${t(n, nw)}</div><div class="pp">${t(d, dw)}</div></div>
                <div class="switch"><div class="knob"></div></div>
              </div>`)}</div>
            </div>
          </div>
        </div>
      </div>
    </div>`;
  }

  scrollbar() {
    return html`<div class="scroll">
      <svg class="ic" width="13" height="11" viewBox="0 0 13 11" fill="#8b8b8b" stroke="#8b8b8b" stroke-linejoin="round"><path d="M6.500 1l5 9h-10z"/></svg>
      <div class="thumb"></div>
      <svg class="ic dn" width="13" height="11" viewBox="0 0 13 11" fill="#8b8b8b" stroke="#8b8b8b" stroke-linejoin="round"><path d="M6.500 10l5.500-9H1z"/></svg>
    </div>`;
  }

  taskbar() {
    const app = (ic: unknown, extra: unknown = nothing, tile: unknown = nothing) => html`<div class="app">${tile}${ic}${extra}</div>`;
    const dot = html`<i class="dot"></i>`;
    return html`<div class="task">
      <svg class="ic" width="29" height="29" viewBox="0 0 29 29"><defs><linearGradient id="w" gradientUnits="userSpaceOnUse" x1="0" y1="0" x2="29" y2="29"><stop offset="0" stop-color="#4ccdfb"/><stop offset="1" stop-color="#0674d6"/></linearGradient></defs><path fill="url(#w)" d="M1 0h13v14H0V1a1 1 0 0 1 1-1zM15 0h13a1 1 0 0 1 1 1v13H15zM0 15h14v14H1a1 1 0 0 1-1-1zM15 15h14v13a1 1 0 0 1-1 1H15z"/></svg>
      <div class="search"><svg class="ic" width="19" height="19" viewBox="0 0 19 19" fill="none" stroke="#222" stroke-width="2"><circle cx="8" cy="8" r="6.800"/><path d="M12.800 12.800l5 5" stroke-linecap="round"/></svg>${t("Search", 51)}</div>
      <div class="apps">
        ${app(tb.taskview)} ${app(tb.chat)} ${app(tb.sticky)} ${app(tb.edge)} ${app(tb.explorer)} ${app(tb.copilot)} ${app(tb.anydesk, dot)}
        ${app(chrome, html`<span class="pill k">K</span>${dot}`)} ${app(tb.rdp, dot)}
        ${app(tb.whatsapp, html`<span class="pill n">4</span><i class="dot red"></i>`, html`<i class="tile"></i>`)}
        ${app(chrome, html`<span class="pill p">P</span><i class="dot act"></i>`, html`<i class="tile w"></i>`)}
      </div>
      <div class="tray">
        <svg class="ic" width="14" height="8" viewBox="0 0 14 8" fill="none" stroke="currentColor" stroke-width="1.700"><path d="M.8 7.200L7 1.200l6.200 6"/></svg>
        <div class="lang">${t("ENG", 28)}${t("IN", 14)}</div>
        <svg class="ic wifi" width="20" height="16" viewBox="0 0 20 16" fill="none" stroke="currentColor" stroke-width="1.400" stroke-linecap="round"><path d="M1 5.500a12.700 12.700 0 0 1 18 0M3.700 8.300a8.900 8.900 0 0 1 12.600 0M6.400 11a5.100 5.100 0 0 1 7.200 0"/><circle cx="10" cy="13.800" r="1.300" fill="currentColor" stroke-width=".8"/></svg>
        <svg class="ic vol" width="21" height="17" viewBox="0 0 21 17" fill="none" stroke="currentColor" stroke-width="1.300" stroke-linecap="round" stroke-linejoin="round"><path d="M.8 5.800h3L8.500 2v13L3.800 11.200h-3zM11.500 6q1.300 2.500 0 5M14.200 3.800q2.600 4.700 0 9.400M17 1.500q4.500 7 0 14"/></svg>
        <svg class="ic batt" width="21" height="13" viewBox="0 0 21 13" fill="none" stroke="currentColor" stroke-width="1.500"><rect x=".8" y=".8" width="16.500" height="11.400" rx="2.500"/><path d="M3 3h5v7H3z" fill="currentColor" stroke="none"/><path d="M19 4.500v4" stroke-width="2.200"/></svg>
        <div class="clock">${t("11:30", 35)}${t("10-04-2025", 77)}</div>
        <svg class="ic bell" width="18" height="21" viewBox="0 0 18 21"><path d="M2 9a6 6 0 0 1 6-7l2 .2V9l5 1v4l1 2v1.500H0V16l2-2.500z" fill="#1b1b1b"/><path d="M5.500 18.500h5q-2.500 2.500-5 0z" fill="#1b1b1b" stroke="#1b1b1b"/><path d="M6.500 7.500h4l-4 5.500h4" fill="none" stroke="#fff" stroke-width="1.300"/><path d="M12 1.500h4.500L12 7h4.500" fill="none" stroke="#1b1b1b" stroke-width="1.400"/></svg>
      </div>
    </div>`;
  }
}
